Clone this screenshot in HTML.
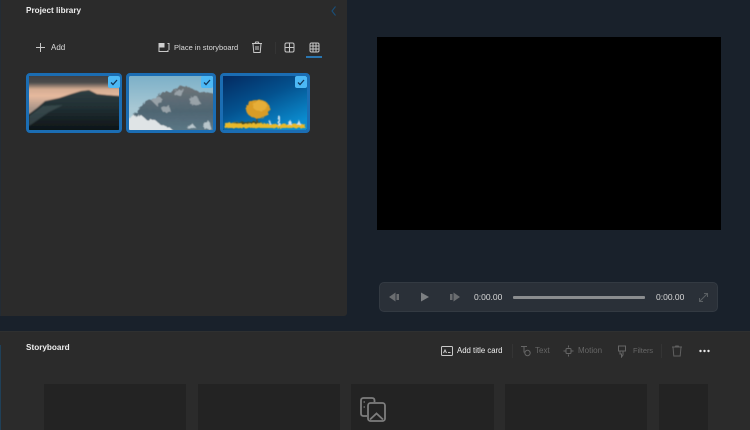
<!DOCTYPE html>
<html><head><meta charset="utf-8">
<style>
html,body{margin:0;padding:0;width:750px;height:430px;overflow:hidden;background:#19212b}
body{font-family:"Liberation Sans",sans-serif;position:relative}
div,svg,span{position:absolute;box-sizing:border-box}
#w{left:0;top:0;width:750px;height:430px;filter:blur(.3px)}
.t{white-space:nowrap;color:#dcdcdc;font-size:7.5px;line-height:10px}
.b{font-weight:bold;color:#eee;font-size:8.2px}
.dim{color:#666}
.thumb{top:73px;height:60px;border:3px solid #1b6db3;border-radius:4px;overflow:hidden;background:#000}
.thumb svg{left:0;top:0}
.chk{top:76px;width:12px;height:12px;background:#4cb8f5;border-radius:2px}
.card{top:384px;height:46px;background:#232323}
svg.i{fill:none;stroke:#c8c8c8;stroke-width:1}
</style></head><body><div id="w">
<div style="left:0;top:0;width:347px;height:316px;background:#2b2b2b;border-radius:0 0 3px 0;border-left:1px solid #232c35"></div>
<div class="t b" style="left:26px;top:6px">Project library</div>
<svg class="i" style="left:330px;top:5px;stroke:#1a4f78;stroke-width:1.100" width="8" height="12"><path d="M5.500 1.500L2 6l3.500 4.500"/></svg>

<svg class="i" style="left:35px;top:42px" width="11" height="11"><path d="M5.500 1v9M1 5.500h9"/></svg>
<div class="t" style="left:51px;top:43px;font-size:8px">Add</div>

<svg class="i" style="left:158px;top:42px" width="12" height="11"><path d="M6 1.500H1v8h9V8M9.500 1.500H11V8"/><rect x="1.500" y="1" width="5" height="4.500" fill="#d0d0d0" stroke="none"/></svg>
<div class="t" style="left:174px;top:43px">Place in storyboard</div>
<svg class="i" style="left:251px;top:41px" width="12" height="13"><path d="M1 2.500h10M2 2.500l.8 9h6.400l.8-9M4 2.500l.7-1.500h2.600L8 2.500M5 5v4M7 5v4"/></svg>
<div style="left:275px;top:42px;width:1px;height:12px;background:#343434"></div>
<svg class="i" style="left:284px;top:42px" width="11" height="11"><rect x="1" y="1" width="9" height="9" rx="1.500"/><path d="M5.500 1v9M1 5.500h9"/></svg>
<svg class="i" style="left:309px;top:42px" width="11" height="11"><rect x="1" y="1" width="9" height="9" rx="1.500"/><path d="M4 1v9M7 1v9M1 4h9M1 7h9"/></svg>
<div style="left:306px;top:56px;width:16px;height:1.500px;background:#2a76b0"></div>

<div class="thumb" style="left:26px;width:96px">
<svg width="90" height="54" viewBox="0 0 90 54">
<defs>
<linearGradient id="a" x1="0" y1="0" x2="0" y2="1"><stop offset="0" stop-color="#3c3d40"/><stop offset=".16" stop-color="#4a4a4b"/><stop offset=".27" stop-color="#d4ac92"/><stop offset=".38" stop-color="#e6b99d"/><stop offset=".6" stop-color="#a89488"/></linearGradient>
<linearGradient id="a2" x1="0" y1="0" x2="0" y2="1"><stop offset="0" stop-color="#2f3e42"/><stop offset=".45" stop-color="#1f2d31"/><stop offset="1" stop-color="#0c1215"/></linearGradient>
<filter id="f1"><feGaussianBlur stdDeviation=".9"/></filter>
</defs>
<g filter="url(#f1)">
<rect x="-3" y="-3" width="96" height="60" fill="url(#a)"/>
<path d="M0 38L8 32L16 25L30 22L42 18L52 15L60 14L68 18L78 19L92 20V56H-2V38Z" fill="url(#a2)"/>
<path d="M0 40L14 30L34 29L20 36L0 50Z" fill="#45575a" opacity=".6"/>
</g></svg></div>
<div class="thumb" style="left:126px;width:90px">
<svg width="84" height="54" viewBox="0 0 84 54">
<defs>
<linearGradient id="b" x1="0" y1="0" x2="0" y2="1"><stop offset="0" stop-color="#7cb0c8"/><stop offset=".6" stop-color="#a8c8d4"/></linearGradient>
<linearGradient id="b2" x1="0" y1="0" x2="0" y2="1"><stop offset="0" stop-color="#6e7478"/><stop offset=".55" stop-color="#4f6572"/><stop offset="1" stop-color="#5c7886"/></linearGradient>
<filter id="f2" x="-5%" y="-5%" width="110%" height="110%"><feTurbulence type="fractalNoise" baseFrequency=".3" numOctaves="3" seed="4" result="n"/><feDisplacementMap in="SourceGraphic" in2="n" scale="4" result="d"/><feGaussianBlur in="d" stdDeviation=".6"/></filter>
</defs>
<rect width="84" height="54" fill="url(#b)"/>
<g filter="url(#f2)">
<path d="M-2 46L8 36L16 26L26 22L34 16L42 16L50 10L60 11L70 16L86 17V56H-2Z" fill="url(#b2)"/>
<path d="M22 24L30 20L34 24L28 30ZM47 14L55 13L52 20L45 19ZM60 22L68 20L72 28L62 29ZM32 32L40 29L42 36L34 36Z" fill="#98a2a8"/>
<path d="M-2 56V44L4 40L12 39L18 44L26 44L32 49L40 51L46 56Z" fill="#dfe4e6"/>
<path d="M58 52L63 47L67 52ZM74 48L80 45L82 53L75 53Z" fill="#b8c6cc"/>
</g></svg></div>
<div class="thumb" style="left:220px;width:90px">
<svg width="84" height="54" viewBox="0 0 84 54">
<defs>
<linearGradient id="c" x1="0" y1="0" x2=".7" y2="1"><stop offset="0" stop-color="#042a60"/><stop offset=".5" stop-color="#04528f"/><stop offset="1" stop-color="#0b8ccf"/></linearGradient>
<filter id="f3" x="-5%" y="-5%" width="110%" height="110%"><feTurbulence type="fractalNoise" baseFrequency=".4" numOctaves="2" seed="7" result="n"/><feDisplacementMap in="SourceGraphic" in2="n" scale="3" result="d"/><feGaussianBlur in="d" stdDeviation=".45"/></filter>
</defs>
<rect width="84" height="54" fill="url(#c)"/>
<g filter="url(#f3)">
<rect x="33" y="38" width="1.500" height="9" fill="#5b4420"/>
<ellipse cx="35" cy="33" rx="12" ry="9.500" fill="#d99c28"/>
<ellipse cx="37" cy="30" rx="7" ry="5" fill="#e6ae38"/>
<path d="M2 47L20 46L50 48L82 48V52H2Z" fill="#e8b92b"/>
<path d="M8 47L30 45L40 47L20 48Z" fill="#3f4d2a"/>
<path d="M55 49V40h2v9zM65 49l2-6 2 6zM74 49l2-5 2 5zM46 48l1-4 1 4z" fill="#cfe2ee"/>
</g></svg></div>
<div class="chk" style="left:108px"></div><div class="chk" style="left:201px"></div><div class="chk" style="left:295px"></div>
<svg style="left:107px;top:75px;fill:none;stroke:#14385a;stroke-width:1.300" width="13" height="13"><path d="M4 7.500l2 2 4-4.500"/></svg>
<svg style="left:200px;top:75px;fill:none;stroke:#14385a;stroke-width:1.300" width="13" height="13"><path d="M4 7.500l2 2 4-4.500"/></svg>
<svg style="left:294px;top:75px;fill:none;stroke:#14385a;stroke-width:1.300" width="13" height="13"><path d="M4 7.500l2 2 4-4.500"/></svg>

<div style="left:377px;top:37px;width:344px;height:193px;background:#000"></div>

<div style="left:379px;top:282px;width:339px;height:30px;background:#2a3038;border:1px solid #333a42;border-radius:5px"></div>
<svg style="left:388px;top:291px;fill:#6a6d70" width="12" height="12"><path d="M1 6L7.500 1.500V10.500zM8.500 3H11V9H8.500z"/></svg>
<svg style="left:420px;top:291px;fill:#7c7f82" width="10" height="12"><path d="M1 1.500v9L9 6z"/></svg>
<svg style="left:449px;top:291px;fill:#6a6d70" width="12" height="12"><path d="M11 6L4.500 1.500V10.500zM1 3H3.500V9H1z"/></svg>
<div class="t" style="left:474px;top:292px;color:#d8d8d8;font-size:8.500px">0:00.00</div>
<div style="left:513px;top:296px;width:132px;height:2.500px;background:#8b8d8f;border-radius:1px"></div>
<div class="t" style="left:656px;top:292px;color:#d8d8d8;font-size:8.500px">0:00.00</div>
<svg class="i" style="left:698px;top:292px;stroke:#5a5f63" width="11" height="11"><path d="M1.500 9.500l8-8M6 1.500h3.500V5M1.500 6v3.500H5"/></svg>

<div style="left:0;top:331px;width:750px;height:99px;background:#2b2b2b;border-top:1px solid #2f3030"></div>
<div style="left:0;top:345px;width:1px;height:85px;background:#1f4058"></div>
<div class="t b" style="left:26px;top:343px">Storyboard</div>

<svg class="i" style="left:441px;top:346px" width="12" height="10"><rect x=".5" y=".5" width="11" height="9" rx="1"/><path d="M2.500 7l1.500-3 1.500 3M7 6.500h2.500" /></svg>
<div class="t" style="left:457px;top:346px;font-size:7.800px;color:#f0f0f0">Add title card</div>
<div style="left:512px;top:344px;width:1px;height:14px;background:#343434"></div>
<svg class="i" style="left:520px;top:345px;stroke:#666" width="11" height="12"><path d="M1 1.500h6M4 1.500v6"/><circle cx="7.500" cy="8" r="2.700"/></svg>
<div class="t dim" style="left:535px;top:346px;font-size:8px">Text</div>
<svg class="i" style="left:563px;top:345px;stroke:#666" width="11" height="12"><rect x="3" y="3.500" width="5" height="5" rx="1"/><path d="M5.500 .5v2M5.500 9.500v2M.5 6H2.500M8.500 6h2"/></svg>
<div class="t dim" style="left:578px;top:346px;font-size:8px">Motion</div>
<svg class="i" style="left:617px;top:345px;stroke:#666" width="10" height="13"><path d="M1.500 1h7v5h-7zM3 6v3h1.500v3L6 10V6"/></svg>
<div class="t dim" style="left:633px;top:346px;font-size:7.400px">Filters</div>
<div style="left:661px;top:344px;width:1px;height:14px;background:#343434"></div>
<svg class="i" style="left:671px;top:345px;stroke:#606060" width="12" height="12"><path d="M1 2h10M2 2l.8 9h6.400l.8-9M4 2l.7-1h2.600L8 2"/></svg>
<svg style="left:699px;top:349px;fill:#e8e8e8" width="11" height="4"><circle cx="1.500" cy="2" r="1.200"/><circle cx="5.500" cy="2" r="1.200"/><circle cx="9.500" cy="2" r="1.200"/></svg>

<div class="card" style="left:44px;width:142px"></div>
<div class="card" style="left:198px;width:142px"></div>
<div class="card" style="left:351px;width:143px"></div>
<div class="card" style="left:505px;width:142px"></div>
<div class="card" style="left:659px;width:49px"></div>
<svg style="left:359px;top:396px;fill:none;stroke:#7d7d7d;stroke-width:1.800" width="28" height="28"><path d="M8 20H4.500Q2 20 2 17.500V4.500Q2 2 4.500 2H13Q15.500 2 15.500 4.500V6"/><rect x="9" y="7" width="17" height="18" rx="2.500"/><path d="M11 23.500L17.500 17.500L24 23.500"/><path d="M4.500 6h1.500M4.500 11h1.500" stroke-width="1.300"/></svg>
</div></body></html>
